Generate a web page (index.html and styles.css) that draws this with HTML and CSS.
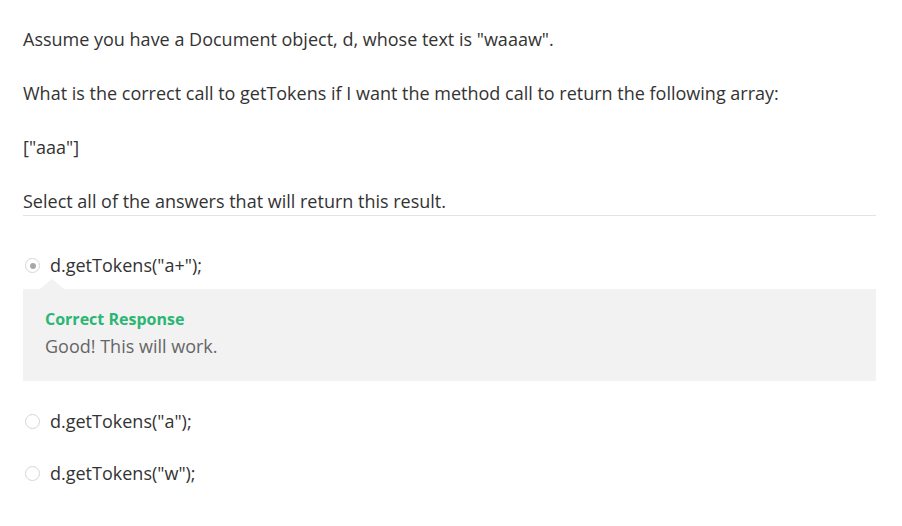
FILE: index.html
```html
<!DOCTYPE html>
<html>
<head>
<meta charset="utf-8">
<link rel="stylesheet" href="styles.css">
</head>
<body>
<div class="question">
  <p class="q-line">Assume you have a Document object, d, whose text is "waaaw".</p>
  <p class="q-line">What is the correct call to getTokens if I want the method call to return the following array:</p>
  <p class="q-line">["aaa"]</p>
  <p class="q-line q-last">Select all of the answers that will return this result.</p>
</div>
<div class="options">
  <div class="option">
    <span class="radio checked"></span>
    <span class="opt-text">d.getTokens("a+");</span>
  </div>
  <div class="feedback">
    <div class="fb-title">Correct Response</div>
    <div class="fb-text">Good! This will work.</div>
  </div>
  <div class="option">
    <span class="radio"></span>
    <span class="opt-text">d.getTokens("a");</span>
  </div>
  <div class="option">
    <span class="radio"></span>
    <span class="opt-text">d.getTokens("w");</span>
  </div>
</div>
</body>
</html>
```
FILE: styles.css
```css
html, body {
  margin: 0;
  padding: 0;
  background: #ffffff;
}
body {
  font-family: "Open Sans", "DejaVu Sans", sans-serif;
  font-size: 18px;
  line-height: 27px;
  color: #333333;
  padding: 26px 26px 0 23px;
}
.question {
  border-bottom: 1px solid #e3e3e3;
}
.q-line {
  margin: 0 0 27px 0;
}
.q-line.q-last {
  margin-bottom: 0;
}
.options {
  display: flex;
  flex-direction: column;
  padding-top: 36px;
}
.option {
  display: flex;
  align-items: center;
  gap: 10px;
  padding-left: 2px;
  height: 27px;
}
.radio {
  width: 13px;
  height: 13px;
  border: 1px solid #d6d6d6;
  border-radius: 50%;
  background: #ffffff;
  display: flex;
  align-items: center;
  justify-content: center;
  flex-shrink: 0;
}
.radio.checked::after {
  content: "";
  width: 6px;
  height: 6px;
  border-radius: 50%;
  background: #a8a8a8;
}
.feedback {
  position: relative;
  background: #f2f2f2;
  margin-top: 10px;
  margin-bottom: 27px;
  padding: 19px 22px 21px 22px;
}
.feedback::before {
  content: "";
  position: absolute;
  top: -10px;
  left: 17px;
  border-left: 12px solid transparent;
  border-right: 12px solid transparent;
  border-bottom: 10px solid #f2f2f2;
}
.fb-title {
  color: #2bb673;
  font-weight: 700;
  font-size: 16px;
  line-height: 22px;
}
.fb-text {
  color: #666666;
  font-size: 18px;
  line-height: 28px;
  margin-top: 2px;
}
.options .option + .option {
  margin-top: 25px;
}
```
